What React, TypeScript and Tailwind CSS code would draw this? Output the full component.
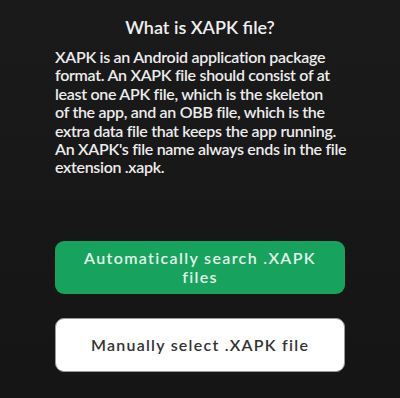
export default function App() {
  return (
    <div
      className="w-[400px] h-[398px] bg-gradient-to-b from-[#1a1a1a] to-[#151515] text-[#ececec] overflow-hidden"
      style={{ fontFamily: "Lato, 'Open Sans', sans-serif" }}
    >
      <div className="w-[290px] mx-auto pt-[14px]">
        <h1 className="text-center text-[18px] leading-[26px] font-semibold text-[#f0f0f0]">
          What is XAPK file?
        </h1>
        <p className="mt-[8px] text-[16px] leading-[18.4px] font-semibold tracking-[-0.3px] whitespace-nowrap">
          XAPK is an Android application package
          <br />
          format. An XAPK file should consist of at
          <br />
          least one APK file, which is the skeleton
          <br />
          of the app, and an OBB file, which is the
          <br />
          extra data file that keeps the app running.
          <br />
          An XAPK's file name always ends in the file
          <br />
          extension .xapk.
        </p>

        <div className="mt-[64px] flex flex-col gap-[24px]">
          <button className="h-[53px] w-full rounded-[9px] bg-[#17a35d] text-[#e4f3ea] text-[16px] leading-[19px] font-semibold tracking-[1.35px] px-[26px]">
            Automatically search .XAPK files
          </button>
          <button className="h-[54px] w-full rounded-[9px] bg-white border border-[#9a9a9a] text-[#333] text-[16px] leading-[19px] font-semibold tracking-[1.25px]">
            Manually select .XAPK file
          </button>
        </div>
      </div>
    </div>
  );
}
